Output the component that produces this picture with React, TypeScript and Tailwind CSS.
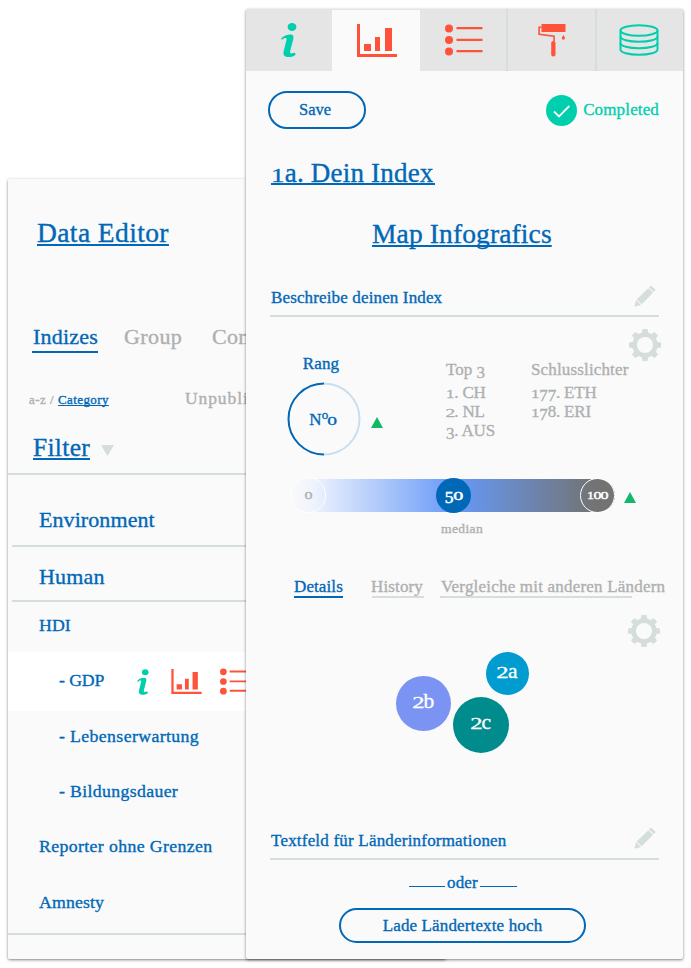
import React from "react";

/* Old-style numerals: 0-2 sit at x-height, 3/4/5/7/9 hang below the baseline. */
function Num({ children }: { children: string }) {
  return (
    <>
      {children.split("").map((c, i) => {
        if ("02".includes(c))
          return (
            <span key={i} className="inline-block origin-[50%_84%] scale-x-115 scale-y-73 leading-none">
              {c}
            </span>
          );
        if (c === "1")
          return (
            <span key={i} className="inline-block origin-[50%_84%] scale-y-73 leading-none">
              {c}
            </span>
          );
        if ("34579".includes(c))
          return (
            <span key={i} className="inline-block translate-y-[0.16em] leading-none">
              {c}
            </span>
          );
        return <React.Fragment key={i}>{c}</React.Fragment>;
      })}
    </>
  );
}

function InfoIcon({ className }: { className: string }) {
  return (
    <svg viewBox="0 0 16 34" className={className} fill="#00cfad">
      <ellipse cx="11" cy="4" rx="4.4" ry="4" />
      <path d="M0.2 15.6C2.5 12.6 6 11.4 9.5 11.4C12.6 11.4 12.9 13.6 12.2 16.4L9.3 27.5C8.7 30 9.6 30.6 10.8 30.4C12 30.2 12.3 29.8 13 29.8C14.6 29.8 14.8 31.2 14.2 31.9C12.6 33.5 9.7 34 7.3 34C3.2 34 1.8 31.8 2.7 28L5.5 17C5.9 15.3 5 14.7 3.8 15C2.7 15.3 2.4 16.3 1.2 16.5C0.4 16.6 0 16.2 0.2 15.6Z" />
    </svg>
  );
}

function ChartIcon({ className }: { className: string }) {
  return (
    <svg viewBox="0 0 40 33" className={className} fill="#ff523b">
      <path d="M0 0h3v30h37v3H0zM7 20h7v7H7zM18 13h5v14h-5zM28 4h7v23h-7z" />
    </svg>
  );
}

function ListIcon({ className }: { className: string }) {
  return (
    <svg viewBox="0 0 38 32" className={className} fill="#ff523b">
      <circle cx="4" cy="4.5" r="4" />
      <circle cx="4" cy="16" r="4" />
      <circle cx="4" cy="27.5" r="4" />
      <path d="M11.5 3h26v2.3h-26zM11.5 14.7h26V17h-26zM11.5 25.9h26v2.3h-26z" />
    </svg>
  );
}

function RollerIcon() {
  return (
    <svg viewBox="0 0 28 34" className="h-[34px] w-[28px]" fill="#ff523b">
      <path d="M3.5 1h24v8h-24z" />
      <path d="M3.5 4.3H1.1v7l15 1.8V18" fill="none" stroke="#ff523b" strokeWidth="1.6" />
      <rect x="13.2" y="18" width="4.3" height="15.5" rx="2" />
      <path d="M25.4 12c.8 1.5 1.6 2.1 1.6 3.1a1.6 1.6 0 0 1-3.2 0c0-1 .8-1.6 1.6-3.1z" />
    </svg>
  );
}

function DatabaseIcon() {
  return (
    <svg viewBox="0 0 40 32" className="h-[32px] w-[40px]" fill="none" stroke="#00cfad" strokeWidth="2">
      <ellipse cx="20" cy="6.5" rx="18.5" ry="5.3" />
      <path d="M1.5 6.5v19c0 3 8 5.3 18.5 5.3s18.5-2.3 18.5-5.3v-19" />
      <path d="M1.5 12.500c0 3 8 5.300 18.500 5.300s18.500-2.300 18.500-5.300M1.500 19c0 3 8 5.300 18.500 5.300s18.500-2.300 18.500-5.300" />
    </svg>
  );
}

function Pencil() {
  return (
    <svg viewBox="0 0 22 22" className="size-[22px]" fill="#d6dddd">
      <path d="M15 2.400l1.900-1.900 4.800 4.600-2 2zM14.300 3.200l4.700 4.600L7.700 19.300l-5-4.900zM2 15.100l5 5L.4 21.700z" />
    </svg>
  );
}

function Gear() {
  return (
    <svg viewBox="-17 -17 34 34" className="size-[34px] shrink-0" fill="#d6dddd">
      {[0, 45, 90, 135].map((a) => (
        <path key={a} transform={`rotate(${a})`} d="M-2.500-16h5l.8 5v22l-.8 5h-5l-.8-5v-22z" />
      ))}
      <circle r="12.700" />
      <circle r="8" fill="#fafafa" />
    </svg>
  );
}

function Triangle() {
  return (
    <svg viewBox="0 0 12 11" className="h-[11px] w-[12px]" fill="#12b76a">
      <path d="M6 0l6 11H0z" />
    </svg>
  );
}

function EditorPanel() {
  return (
    <section className="absolute top-[179px] left-[8px] h-[780px] w-[438px] overflow-hidden rounded-[2px] bg-[#fafafa]">
      <h1 className="mt-[34px] ml-[29px] text-[27.5px] leading-[40px] tracking-[0.4px] underline decoration-[1.5px] underline-offset-[2px]">
        Data Editor
      </h1>
      <nav className="mt-[68px] flex h-[33px] pl-[24px] text-[22px] leading-[32px] text-[#aeb0b0]">
        <span className="h-[32px] w-[66px] border-b-2 border-[#0068b7] pl-[1px] tracking-[0.2px] text-[#0068b7]">Indizes</span>
        <span className="ml-[26px] w-[88px] tracking-[0.4px]">Group</span>
        <span className="tracking-[0.3px]">Compare</span>
      </nav>
      <div className="mt-[34px] flex h-[20px] items-baseline text-[13px] leading-[20px] text-[#aeb0b0]">
        <span className="ml-[21px] w-[29px] tracking-[0.5px] whitespace-nowrap">a-z /</span>
        <span className="w-[127px]">
          <span className="tracking-[0.4px] text-[#0068b7] underline decoration-1 underline-offset-[1px]">Category</span>
        </span>
        <span className="text-[17.5px] tracking-[0.9px]">Unpublished</span>
      </div>
      <div className="mt-[21px] flex h-[46px] border-b-2 border-[#d6dddd]">
        <span className="ml-[25px] w-[68px] text-[25.5px] leading-[37px] tracking-[0.3px] underline decoration-[1.5px] underline-offset-[2px]">
          Filter
        </span>
        <svg viewBox="0 0 13 11" className="mt-[16px] h-[11px] w-[13px]" fill="#d6dddd">
          <path d="M0 0h13L6.500 11z" />
        </svg>
      </div>
      <ul className="pl-[4px] text-[22px]">
        <li className="h-[72px] border-b-2 border-[#d6dddd] pt-[30px] pl-[27px] leading-[30px] tracking-[0.08px]">Environment</li>
        <li className="h-[55px] border-b-2 border-[#d6dddd] pt-[15px] pl-[27px] leading-[30px] tracking-[0.2px]">Human</li>
      </ul>
      <ul className="text-[17.75px]">
        <li className="h-[50px] pl-[31px] leading-[47px] tracking-[0.1px]">HDI</li>
        <li className="flex h-[59px] items-center bg-white pl-[51px]">
          <span className="mt-[-2px] w-[78px] tracking-[-0.1px] whitespace-nowrap">- GDP</span>
          <InfoIcon className="h-[26px] w-[12px] shrink-0" />
          <ChartIcon className="ml-[22px] h-[25px] w-[31px] shrink-0" />
          <ListIcon className="ml-[18px] h-[27px] w-[32px] shrink-0" />
        </li>
        <li className="h-[55px] pl-[51px] leading-[51px] tracking-[0.38px]">- Lebenserwartung</li>
        <li className="h-[55px] pl-[51px] leading-[51px] tracking-[0.35px]">- Bildungsdauer</li>
        <li className="h-[56px] pl-[31px] leading-[51px] tracking-[0.38px]">Reporter ohne Grenzen</li>
        <li className="h-[58px] border-b-2 border-[#d6dddd] pl-[31px] leading-[50px] tracking-[0.15px]">Amnesty</li>
      </ul>
    </section>
  );
}

function DetailPanel() {
  return (
    <main className="relative mt-[9px] ml-[246px] flex h-[950px] w-[437px] flex-col rounded-[2px] bg-[#fafafa] text-[17px] tracking-[0.14px] shadow-[0_1px_3px_rgba(0,0,0,0.5)]">
      <nav className="flex h-[62px] shrink-0 bg-[#e5e5e5]">
        <div className="flex w-[86px] items-center justify-center">
          <InfoIcon className="h-[34px] w-[16px]" />
        </div>
        <div className="mt-px flex w-[88px] items-center justify-center bg-[#fafafa] pl-[2px]">
          <ChartIcon className="h-[33px] w-[40px]" />
        </div>
        <div className="flex w-[88px] items-center justify-center border-r-2 border-[#d6dddd]">
          <ListIcon className="mr-[-1px] h-[32px] w-[38px]" />
        </div>
        <div className="flex w-[89px] items-center justify-center border-r-2 border-[#d6dddd]">
          <RollerIcon />
        </div>
        <div className="flex flex-1 items-center justify-center pr-[2px]">
          <DatabaseIcon />
        </div>
      </nav>

      <div className="mt-[20px] flex h-[38px] shrink-0 items-center justify-between pr-[24px] pl-[22px]">
        <button className="h-[38px] w-[98px] rounded-[19px] border-2 border-[#0068b7] pr-[4px] text-[16.5px] tracking-[0px]">Save</button>
        <div className="flex items-center text-[#00cfad]">
          <svg viewBox="0 0 31 31" className="mr-[6px] size-[31px]">
            <circle cx="15.500" cy="15.500" r="15.500" fill="#00cfad" />
            <path d="M8 16.500l5 5L23.300 11" fill="none" stroke="#fafafa" strokeWidth="1.800" />
          </svg>
          Completed
        </div>
      </div>

      <h2 className="mt-[24px] ml-[25px] h-[32px] w-[164px] shrink-0 border-b-2 border-[#0068b7] text-[27px] leading-[40px] tracking-[0.2px] whitespace-nowrap">
        <Num>1a. Dein Index</Num>
      </h2>
      <h2 className="mt-[29px] ml-[126px] h-[40px] shrink-0 text-[27.5px] leading-[40px] tracking-[0.120px] underline decoration-[1.5px] underline-offset-[2px]">
        Map Infografics
      </h2>

      <div className="mx-[24px] mt-[25px] flex h-[38px] shrink-0 justify-between border-b-2 border-[#d6dddd] pr-[3px] pl-[1px] leading-[37px]">
        Beschreibe deinen Index
        <div className="pt-[6px]">
          <Pencil />
        </div>
      </div>

      <div className="flex h-[160px] shrink-0 pl-[41px]">
        <div className="flex w-[74px] flex-col items-center pt-[37px]">
          <span className="mr-[6px] leading-[20px]">Rang</span>
          <div className="mt-[8px] grid size-[74px]">
            <svg viewBox="0 0 74 74" className="col-start-1 row-start-1 size-[74px]" fill="none" strokeWidth="2">
              <path d="M37 1.500a35.500 35.500 0 0 1 0 71" stroke="#c9deee" />
              <path d="M37 1.500a35.500 35.500 0 0 0 0 71" stroke="#0068b7" />
            </svg>
            <span className="col-start-1 row-start-1 mt-[2px] mr-[2px] self-center text-center text-[17px] leading-[20px] tracking-[0px]">
              N<span className="relative top-[-0.45em] inline-block text-[13px] leading-none">o</span>
              <Num>0</Num>
            </span>
          </div>
        </div>
        <div className="mt-[100px] ml-[10px] w-[12px]">
          <Triangle />
        </div>
        <div className="mt-[43px] ml-[63px] w-[85px] leading-[19px] tracking-[-0.2px] text-[#aeb0b0]">
          <p className="h-[23px] tracking-[0px]"><Num>Top 3</Num></p>
          <p><Num>1. CH</Num></p>
          <p><Num>2. NL</Num></p>
          <p><Num>3. AUS</Num></p>
        </div>
        <div className="mt-[43px] w-[98px] leading-[19px] tracking-[-0.200px] text-[#aeb0b0]">
          <p className="h-[23px] tracking-[0.150px]">Schlusslichter</p>
          <p><Num>177. ETH</Num></p>
          <p><Num>178. ERI</Num></p>
        </div>
        <div className="mt-[11px] -ml-[1px]">
          <Gear />
        </div>
      </div>

      <div className="flex h-[36px] shrink-0 items-center pl-[44px]">
        <div className="flex h-[33px] w-[325px] items-center justify-between rounded-full bg-[linear-gradient(90deg,#fafafa_0%,#f2f5fd_6%,#6699f7_51%,#737373_94%)] text-[14px] tracking-[0px] text-white">
          <div className="flex size-[36px] shrink-0 items-center justify-center rounded-full border border-white text-[#aeb0b0]">
            <Num>0</Num>
          </div>
          <div className="mr-[-1px] flex size-[35px] shrink-0 items-center justify-center rounded-full bg-[#0068b7] pb-[1px] text-[17.5px] [-webkit-text-stroke:0.5px]">
            <Num>50</Num>
          </div>
          <div className="flex size-[35px] shrink-0 items-center justify-center rounded-full border border-white [-webkit-text-stroke:0.5px]">
            <Num>100</Num>
          </div>
        </div>
        <div className="mt-[5px] ml-[9px]">
          <Triangle />
        </div>
      </div>
      <p className="mt-[6px] ml-[195px] h-[18px] shrink-0 text-[13.5px] leading-[19px] tracking-[0.4px] text-[#aeb0b0]">median</p>

      <nav className="mt-[40px] flex h-[21px] shrink-0 pl-[48px] leading-[19px] whitespace-nowrap text-[#aeb0b0]">
        <span className="h-[21px] w-[49px] border-b-2 border-[#0068b7] tracking-[0.1px] text-[#0068b7]">Details</span>
        <span className="ml-[29px] h-[21px] w-[52px] border-b-2 border-[#d6dddd] indent-[-1px]">History</span>
        <span className="ml-[16px] h-[21px] w-[192px] border-b-2 border-[#d6dddd] pl-[1px] tracking-[0.2px]">Vergleiche mit anderen Ländern</span>
      </nav>

      <div className="relative h-[224px] shrink-0 pt-[16px] pr-[22px] text-[21.5px] leading-none text-white">
        <div className="flex justify-end">
          <Gear />
        </div>
        <div className="absolute top-[54px] left-[240px] flex size-[43px] items-center justify-center rounded-full bg-[#009bcf] pb-[4px]">
          <Num>2a</Num>
        </div>
        <div className="absolute top-[78px] left-[150px] flex size-[55px] items-center justify-center rounded-full bg-[#7b93f2] pb-[4px]">
          <Num>2b</Num>
        </div>
        <div className="absolute top-[99px] left-[207px] flex size-[56px] items-center justify-center rounded-full bg-[#008c8c] pb-[4px]">
          <Num>2c</Num>
        </div>
      </div>

      <div className="mx-[24px] flex h-[38px] shrink-0 justify-between border-b-2 border-[#d6dddd] pr-[3px] pl-[1px] leading-[37px] tracking-[0.2px]">
        Textfeld für Länderinformationen
        <div className="pt-[5px]">
          <Pencil />
        </div>
      </div>
      <div className="mt-[12px] flex h-[22px] shrink-0 pl-[163px] leading-[22px]">
        <span className="mt-[14px] h-px w-[36px] bg-[#0068b7]" />
        <span className="ml-[2px] w-[33px]">oder</span>
        <span className="mt-[14px] h-px w-[37px] bg-[#0068b7]" />
      </div>
      <button className="mt-[14px] ml-[93px] h-[35px] w-[247px] shrink-0 rounded-[18px] border-2 border-[#0068b7]">
        Lade Ländertexte hoch
      </button>
    </main>
  );
}

export default function App() {
  return (
    <div className="relative flex h-[968px] w-[691px] overflow-hidden bg-white [font-family:'Liberation_Serif',serif] text-[#0068b7] [-webkit-text-stroke:0.35px] [text-decoration-skip-ink:none]">
      <div className="absolute top-[179px] left-[8px] h-[780px] w-[438px] rounded-[2px] shadow-[0_1px_3px_rgba(0,0,0,0.5)]" />
      <EditorPanel />
      <DetailPanel />
    </div>
  );
}
